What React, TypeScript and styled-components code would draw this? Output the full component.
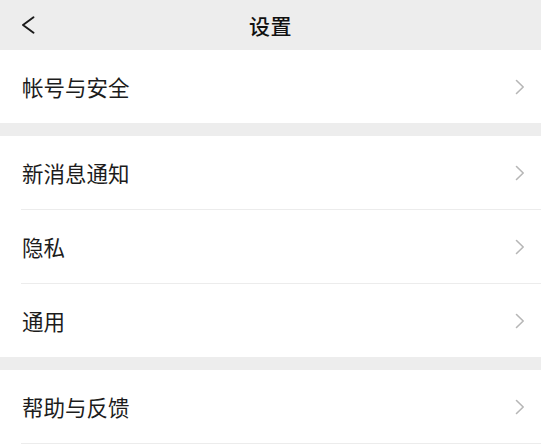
import React from 'react'
import styled, { createGlobalStyle } from 'styled-components'

const GlobalStyle = createGlobalStyle`
  html, body {
    margin: 0;
    padding: 0;
    background: #ededed;
  }
  body {
    font-family: "Noto Sans CJK SC", "Noto Sans", sans-serif;
    -webkit-font-smoothing: antialiased;
  }
`

const Page = styled.div`
  display: flex;
  flex-direction: column;
  min-height: 100vh;
  background: #ededed;
`

const Header = styled.header`
  display: grid;
  grid-template-columns: 1fr auto 1fr;
  align-items: center;
  height: 50px;
  background: #ededed;
`

const BackButton = styled.button`
  justify-self: start;
  display: flex;
  align-items: center;
  padding: 0 0 0 21px;
  margin: 0;
  border: none;
  background: none;
  cursor: pointer;
`

const Title = styled.h1`
  margin: 0;
  font-size: 21px;
  font-weight: 500;
  color: #111;
  letter-spacing: 0.5px;
`

const Group = styled.section<{ $open?: boolean }>`
  background: #fff;
  padding-left: 21px;

  & + & {
    margin-top: 13px;
  }

  &:last-child {
    flex: 1;
  }

  ${({ $open }) => $open && `
    & > div:last-child {
      border-bottom: 1px solid #ececec;
    }
  `}
`

const Row = styled.div`
  display: flex;
  align-items: center;
  justify-content: space-between;
  height: 73px;
  padding-right: 16px;
  cursor: pointer;

  & + & {
    border-top: 1px solid #ececec;
  }
`

const Label = styled.span`
  font-size: 21.5px;
  color: #1c1c1c;
  padding-left: 1px;
`

const Chevron = () => (
  <svg width="10" height="16" viewBox="0 0 10 16" fill="none">
    <polyline
      points="1.5,1.5 8.2,8 1.5,14.5"
      stroke="#b6b6b6"
      strokeWidth="1.6"
      strokeLinecap="round"
      strokeLinejoin="round"
    />
  </svg>
)

const BackIcon = () => (
  <svg width="14" height="18" viewBox="0 0 14 18" fill="none">
    <polyline
      points="12.5,1.2 2,9 12.5,16.8"
      stroke="#1a1a1a"
      strokeWidth="1.9"
      strokeLinecap="round"
      strokeLinejoin="round"
    />
  </svg>
)

const groups: { items: string[]; open?: boolean }[] = [
  { items: ['帐号与安全'] },
  { items: ['新消息通知', '隐私', '通用'] },
  { items: ['帮助与反馈'], open: true },
]

const App = () => (
  <>
    <GlobalStyle />
    <Page>
      <Header>
        <BackButton aria-label="返回">
          <BackIcon />
        </BackButton>
        <Title>设置</Title>
        <span />
      </Header>
      {groups.map((group, i) => (
        <Group key={i} $open={group.open}>
          {group.items.map((item) => (
            <Row key={item}>
              <Label>{item}</Label>
              <Chevron />
            </Row>
          ))}
        </Group>
      ))}
    </Page>
  </>
)

export default App
